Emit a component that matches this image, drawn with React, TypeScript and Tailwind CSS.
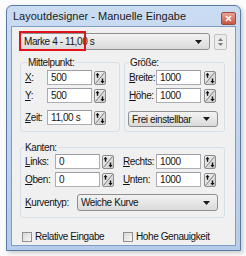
import React from 'react';

const font = { fontFamily: '"Liberation Sans", Arial, sans-serif' };
const txt = 'text-[10px] tracking-[-0.4px] text-[#141414] whitespace-nowrap';

function SpinIcon() {
  return (
    <svg width="12" height="14" viewBox="0 0 12 14" className="shrink-0">
      <defs>
        <linearGradient id="sg" x1="0" y1="0" x2="1" y2="1">
          <stop offset="0" stopColor="#f6f6f6" />
          <stop offset="1" stopColor="#c9c9c9" />
        </linearGradient>
      </defs>
      <rect x="0.5" y="0.5" width="11" height="13" rx="1.5" fill="url(#sg)" stroke="#8c8c8c" />
      <line x1="1.5" y1="12.5" x2="10.5" y2="1.5" stroke="#707070" strokeWidth="0.9" />
      <path d="M3.5 1.8 L5.6 4.3 L4.2 4.3 L4.2 6.8 L2.8 6.8 L2.8 4.3 L1.4 4.3 Z" fill="#111" />
      <path d="M8.5 12.4 L6.4 9.9 L7.8 9.9 L7.8 7.4 L9.2 7.4 L9.2 9.9 L10.6 9.9 Z" fill="#111" />
    </svg>
  );
}

function Field({ label, u, value, labelW, gap = 'ml-[2px]' }: { label: string; u: number; value: string; labelW: string; gap?: string }) {
  return (
    <div className="flex items-center h-[15px]">
      <span className={`${labelW} ${txt}`}>
        {label.slice(0, u)}
        <span className="underline">{label[u]}</span>
        {label.slice(u + 1)}
      </span>
      <div className={`w-[45px] h-[15px] bg-white border border-[#abadb3] border-t-[#9a9da5] pl-[3px] leading-[13px] ${txt}`}>
        {value}
      </div>
      <div className={gap}>
        <SpinIcon />
      </div>
    </div>
  );
}

function Combo({ text, w, h = 'h-[17px]', highlight }: { text: string; w: string; h?: string; highlight?: boolean }) {
  return (
    <div className={`${w} ${h} relative flex items-center rounded-[3px] border border-[#8e8f8f] bg-gradient-to-b from-[#f3f3f3] to-[#dadada] ${txt}`}>
      <span className="pl-[3px]">{text}</span>
      <svg width="7" height="4" viewBox="0 0 7 4" className="ml-auto mr-[7px]">
        <path d="M0 0 L7 0 L3.5 4 Z" fill="#1a1a1a" />
      </svg>
      {highlight && (
        <div className="absolute left-[-2px] top-[-3px] w-[67px] h-[20px] border-2 border-[#e3121a]" />
      )}
    </div>
  );
}

function Check({ label, w }: { label: string; w?: string }) {
  return (
    <div className={`flex items-center ${w ?? ''}`}>
      <div className="w-[10px] h-[10px] border border-[#8f8f8f] bg-gradient-to-br from-[#d8d8d8] to-[#f7f7f7]" />
      <span className={`ml-[3px] ${txt}`}>{label}</span>
    </div>
  );
}

function GroupLabel({ text, ml }: { text: string; ml: string }) {
  return (
    <div className={`-mt-[7px] h-[13px] leading-[13px] w-fit px-[1px] bg-[#f0f0f0] ${ml} ${txt}`}>{text}</div>
  );
}

export default function App() {
  return (
    <div className="w-[246px] h-[256px] bg-[#fbfbfb] pt-[5px] pl-[6px]" style={font}>
      <div className="w-[235px] h-[246px] flex flex-col border border-[#5a7aa3] rounded-t-[6px] bg-gradient-to-b from-[#cadcf2] via-[#c0d5ef] to-[#b5cceb] shadow-[2px_2px_4px_rgba(0,0,0,0.2)]">
        <div className="h-[20px] flex items-center pl-[6px] pr-[4px]">
          <span className="text-[11px] text-[#1a1a1a] whitespace-nowrap">Layoutdesigner - Manuelle Eingabe</span>
          <div className="ml-auto mt-[4px] w-[15px] h-[13px] rounded-[2px] border border-[#9a4a3e] bg-gradient-to-b from-[#eaa293] to-[#c95640] flex items-center justify-center">
            <svg width="7" height="7" viewBox="0 0 7 7">
              <path d="M1 1 L6 6 M6 1 L1 6" stroke="#fff" strokeWidth="1.6" />
            </svg>
          </div>
        </div>
        <div className="flex-1 mx-[4px] mb-[4px] border border-[#7f9dc4] bg-[#f0f0f0] pl-[8px] flex flex-col">
          <div className="flex items-center mt-[6px]">
            <Combo text="Marke 4 - 11,00 s" w="w-[190px]" highlight />
            <div className="ml-[4px] w-[13px] h-[16px] rounded-[2px] border border-[#c2c2c2] bg-[#ececec] flex flex-col items-center justify-center gap-[2px]">
              <svg width="5" height="3" viewBox="0 0 5 3"><path d="M0 3 L5 3 L2.5 0 Z" fill="#7a7a7a" /></svg>
              <svg width="5" height="3" viewBox="0 0 5 3"><path d="M0 0 L5 0 L2.5 3 Z" fill="#7a7a7a" /></svg>
            </div>
          </div>

          <div className="flex gap-[4px] mt-[12px]">
            <div className="w-[100px] h-[70px] border border-[#d5dfe5] rounded-[3px]">
              <GroupLabel text="Mittelpunkt:" ml="ml-[6px]" />
              <div className="flex flex-col pl-[4px] mt-[1px]">
                <Field label="X:" u={0} value="500" labelW="w-[22px]" />
                <div className="mt-[3px]">
                  <Field label="Y:" u={0} value="500" labelW="w-[22px]" />
                </div>
                <div className="mt-[7px]">
                  <Field label="Zeit:" u={0} value="11,00 s" labelW="w-[22px]" />
                </div>
              </div>
            </div>
            <div className="w-[101px] h-[70px] border border-[#d5dfe5] rounded-[3px]">
              <GroupLabel text="Größe:" ml="ml-[4px]" />
              <div className="flex flex-col pl-[4px] mt-[1px]">
                <Field label="Breite:" u={0} value="1000" labelW="w-[27px]" gap="ml-[3px]" />
                <div className="mt-[3px]">
                  <Field label="Höhe:" u={0} value="1000" labelW="w-[27px]" gap="ml-[3px]" />
                </div>
                <div className="mt-[8px] -ml-[1px]">
                  <Combo text="Frei einstellbar" w="w-[90px]" h="h-[16px]" />
                </div>
              </div>
            </div>
          </div>

          <div className="mt-[15px] w-[205px] h-[71px] border border-[#d5dfe5] rounded-[3px]">
            <GroupLabel text="Kanten:" ml="ml-[3px]" />
            <div className="flex pl-[4px]">
              <div className="flex flex-col">
                <Field label="Links:" u={0} value="0" labelW="w-[30px]" />
                <div className="mt-[3px]">
                  <Field label="Oben:" u={0} value="0" labelW="w-[30px]" />
                </div>
              </div>
              <div className="flex flex-col ml-[9px]">
                <Field label="Rechts:" u={0} value="1000" labelW="w-[33px]" gap="ml-[3px]" />
                <div className="mt-[3px]">
                  <Field label="Unten:" u={0} value="1000" labelW="w-[33px]" gap="ml-[3px]" />
                </div>
              </div>
            </div>
            <div className="flex items-center mt-[7px] pl-[4px]">
              <span className={`w-[52px] ${txt}`}>
                <span className="underline">K</span>urventyp:
              </span>
              <Combo text="Weiche Kurve" w="w-[141px]" />
            </div>
          </div>

          <div className="flex items-center mt-[11px] pl-[2px]">
            <Check label="Relative Eingabe" w="w-[101px]" />
            <Check label="Hohe Genauigkeit" />
          </div>
        </div>
      </div>
    </div>
  );
}
